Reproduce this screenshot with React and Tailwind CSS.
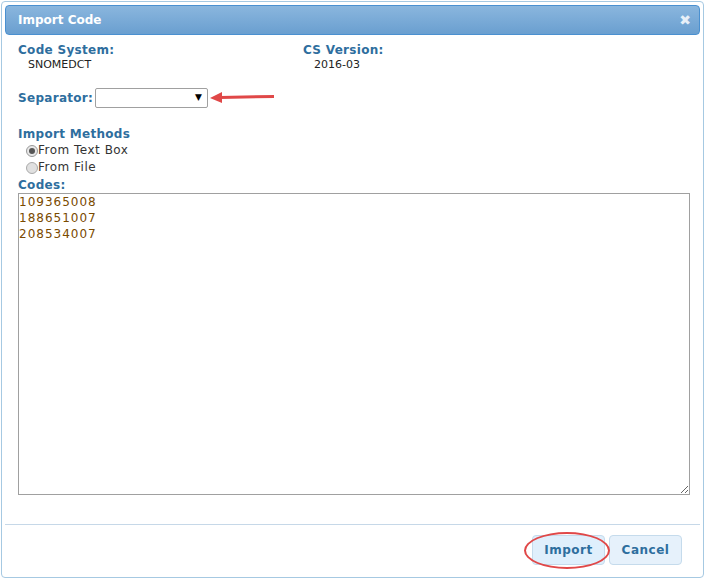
export default function App() {
  const f = { fontFamily: '"DejaVu Sans", Verdana, sans-serif' };
  return (
    <div className="w-[706px] h-[579px] bg-white relative" style={f}>
      <div className="absolute left-[1px] top-[1px] w-[703px] h-[577px] border border-[#a6c9e2] rounded-[4px] bg-white flex flex-col p-[3px]">
        <div className="h-[30px] rounded-[4px] border border-[#4a90d0] bg-gradient-to-b from-[#8ab6de] to-[#6a9fd0] flex items-center justify-between px-[12px] shrink-0">
          <span className="text-white font-bold text-[12px]">Import Code</span>
          <span className="text-[#e8f0f8] font-bold text-[14px] mr-[-4px]">✖</span>
        </div>
        <div className="px-[13px] pt-[8px] flex flex-col text-[12px] text-[#2e6e9e]">
          <div className="flex">
            <div className="w-[285px]">
              <div className="font-bold leading-[15px] tracking-[0.3px]">Code System:</div>
              <div className="text-[#222] text-[11px] pl-[10px] leading-[14px]">SNOMEDCT</div>
            </div>
            <div>
              <div className="font-bold leading-[15px] tracking-[0.3px]">CS Version:</div>
              <div className="text-[#222] text-[11px] pl-[11px] leading-[14px]">2016-03</div>
            </div>
          </div>
          <div className="flex items-center mt-[16px] relative">
            <span className="font-bold w-[77px] tracking-[0.3px]">Separator:</span>
            <div className="w-[113px] h-[20px] border border-[#a0a0a0] rounded-[2px] flex items-center justify-end pr-[5px] text-[9px] text-black">▼</div>
            <svg width="66" height="12" className="ml-[2px]">
              <line x1="10" y1="5.5" x2="64" y2="4.5" stroke="#e04848" strokeWidth="3" />
              <polygon points="0,6 12,0 12,11" fill="#e04848" />
            </svg>
          </div>
          <div className="font-bold mt-[18px] leading-[16px] tracking-[0.3px]">Import Methods</div>
          <div className="flex items-center pl-[8px] leading-[17px] text-[12px] text-[#333] tracking-[0.5px]">
            <span className="w-[12px] h-[12px] rounded-full border border-[#999] bg-[#e8e8e8] flex items-center justify-center"><span className="w-[6px] h-[6px] rounded-full bg-[#555]" /></span>
            <span>From Text Box</span>
          </div>
          <div className="flex items-center pl-[8px] leading-[17px] text-[12px] text-[#333] tracking-[0.5px]">
            <span className="w-[12px] h-[12px] rounded-full border border-[#aaa] bg-[#e0e0e0]" />
            <span>From File</span>
          </div>
          <div className="font-bold leading-[16px] mt-[1px] tracking-[0.3px]">Codes:</div>
          <textarea
            className="w-[672px] h-[302px] border border-[#a0a0a0] text-[12px] text-[#7a4a00] leading-[16px] px-[0px] py-0 resize-y outline-none tracking-[1px]"
            style={f}
            defaultValue={"109365008\n188651007\n208534007"}
          />
        </div>
        <div className="mt-[29px] border-t border-[#c6d8e8] flex justify-end gap-[4px] pr-[18px] pt-[10px]">
          <div className="relative">
            <button className="w-[73px] h-[30px] rounded-[4px] border border-[#c5dbec] bg-[#dfeffc] text-[#2e6e9e] font-bold text-[12px] tracking-[0.5px]" style={f}>Import</button>
            <div className="absolute left-[-8px] top-[-3px] w-[86px] h-[37px] rounded-[50%] border-[2px] border-[#e04848]" />
          </div>
          <button className="w-[73px] h-[30px] rounded-[4px] border border-[#c5dbec] bg-[#e6f1fb] text-[#2e6e9e] font-bold text-[12px] tracking-[0.5px]" style={f}>Cancel</button>
        </div>
      </div>
    </div>
  );
}
